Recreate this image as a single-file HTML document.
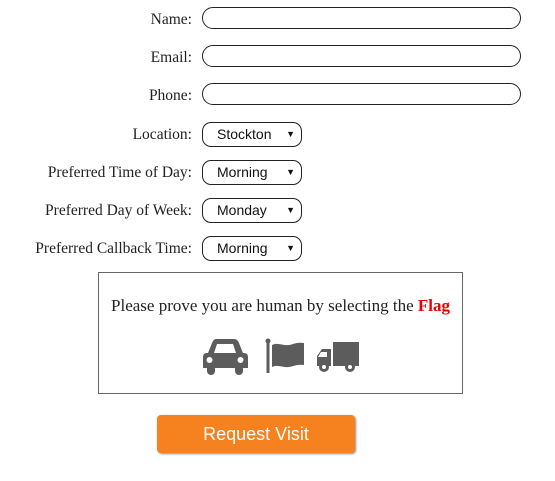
<!DOCTYPE html>
<html><head><style>
body{margin:0;background:#fff;width:555px;height:481px;position:relative;font-family:"Liberation Serif",serif;overflow:hidden}
.l{position:absolute;right:363px;font-size:15.5px;color:#222;line-height:18px}
.in{position:absolute;left:202px;width:317px;height:21px;border:1.5px solid #222;border-radius:11px;box-sizing:border-box}
.s{position:absolute;left:202px;width:100px;height:25px;border:1.5px solid #222;border-radius:9px;box-sizing:border-box;font-family:"Liberation Sans",sans-serif;font-size:14px;line-height:22px;padding-left:14px;color:#111}
.s:after{content:"▼";position:absolute;right:6px;top:0;font-size:9px}
</style></head><body>
<div class="l" style="top:11px">Name:</div><div class="in" style="top:7px;width:319px;height:22px"></div>
<div class="l" style="top:49px">Email:</div><div class="in" style="top:45px;width:319px;height:22px"></div>
<div class="l" style="top:87px">Phone:</div><div class="in" style="top:83px;width:319px;height:22px"></div>
<div class="l" style="top:126px">Location:</div><div class="s" style="top:122px">Stockton</div>
<div class="l" style="top:164px">Preferred Time of Day:</div><div class="s" style="top:160px">Morning</div>
<div class="l" style="top:202px">Preferred Day of Week:</div><div class="s" style="top:198px">Monday</div>
<div class="l" style="top:240px">Preferred Callback Time:</div><div class="s" style="top:236px">Morning</div>
<div style="position:absolute;left:98px;top:272px;width:365px;height:122px;border:1px solid #666;box-sizing:border-box"></div>
<div style="position:absolute;left:98px;width:365px;top:296px;text-align:center;font-size:17px;color:#222">Please prove you are human by selecting the <b style="color:#e00">Flag</b></div>
<svg style="position:absolute;left:200px;top:336px" width="165" height="40" viewBox="0 0 165 40">
<g fill="#5c5c5c">
<path d="M14 3h20c3 0 4 2 5 4l4 10h1c3 0 4 2 4 4v11h-5v3a4 4 0 0 1-8 0v-3H15v3a4 4 0 0 1-8 0v-3H3V21c0-2 1-4 4-4h1l4-10c1-2 2-4 4-4z"/>
<path d="M17 8h16l3 9H14z" fill="#fff"/>
<circle cx="9.5" cy="24" r="3" fill="#fff"/><circle cx="40.5" cy="24" r="3" fill="#fff"/>
<circle cx="68" cy="5" r="2.5"/><rect x="66.5" y="5" width="3" height="32"/>
<path d="M72 9c6-3 11 1 17 0c5-1 8-3 15-2v22c-6-1-10 1-15 2c-6 1-11-3-17 0z"/>
<rect x="133" y="6" width="26" height="24"/>
<path d="M131 13h-9l-5 7v10h14z"/>
<path d="M121 16h6v5h-9z" fill="#fff"/>
<circle cx="124" cy="31" r="5"/><circle cx="150" cy="31" r="5"/>
<circle cx="124" cy="31" r="2" fill="#fff"/><circle cx="150" cy="31" r="2" fill="#fff"/>
</g></svg>
<div style="position:absolute;left:157px;top:415px;width:198px;height:38px;background:#f5821f;border-radius:4px;box-shadow:1px 1px 2px #888;color:#fff;font-family:'Liberation Sans',sans-serif;font-size:18px;line-height:38px;text-align:center">Request Visit</div>
</body></html>
